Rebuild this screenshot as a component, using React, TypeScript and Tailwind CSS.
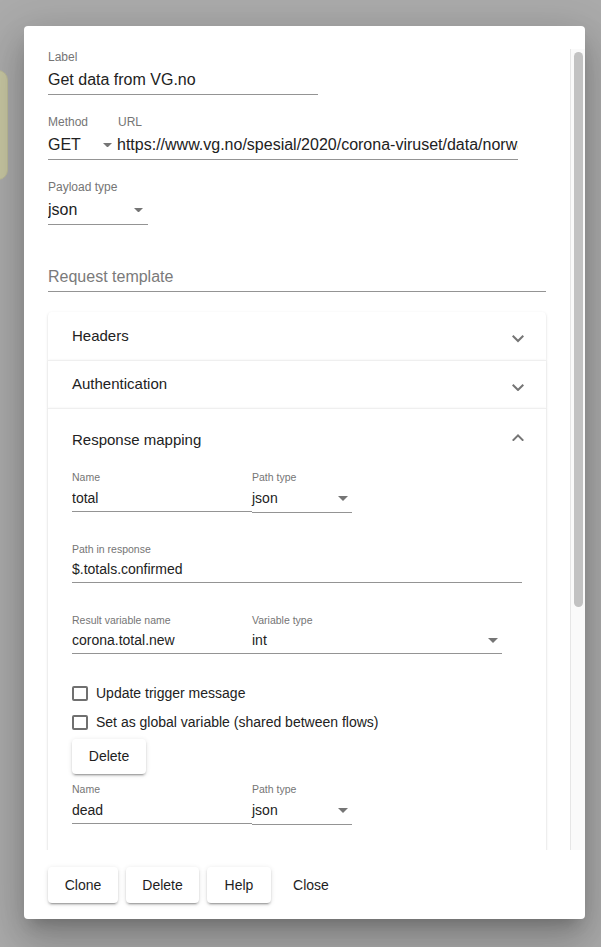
import React from "react";

function Arrow({ big }: { big?: boolean }) {
  return (
    <svg
      viewBox="7 10 10 5"
      className={big ? "w-[9px] h-[4.5px] mr-[5px] shrink-0" : "w-[10px] h-[5px] mr-[4px] shrink-0"}
      fill="#757575"
    >
      <path d="M7 10l5 5 5-5z" />
    </svg>
  );
}

function Chevron({ up }: { up?: boolean }) {
  return up ? (
    <svg viewBox="6 8 12 7.41" className="w-[12px] h-[7.4px] mb-[6px]" fill="#757575">
      <path d="M12 8l-6 6 1.41 1.41L12 10.83l4.59 4.58L18 14z" />
    </svg>
  ) : (
    <svg viewBox="6 8.59 12 7.41" className="w-[12px] h-[7.4px] mt-[6px]" fill="#757575">
      <path d="M16.59 8.59L12 13.17 7.41 8.59 6 10l6 6 6-6z" />
    </svg>
  );
}

function TopLabel({ children }: { children: React.ReactNode }) {
  return <div className="text-[12px] leading-[14px] text-[#757575] whitespace-nowrap">{children}</div>;
}

function TopInput({ children, select }: { children: React.ReactNode; select?: boolean }) {
  return (
    <div className="h-[31px] pt-[2px] border-b border-[#949494] flex items-center justify-between text-[16px] text-[#222] whitespace-nowrap overflow-hidden">
      <span>{children}</span>
      {select && <Arrow big />}
    </div>
  );
}

function SmallLabel({ children }: { children: React.ReactNode }) {
  return <div className="text-[10.5px] leading-[14px] text-[#757575] whitespace-nowrap">{children}</div>;
}

function SmallInput({ children, select }: { children: React.ReactNode; select?: boolean }) {
  return (
    <div className="h-[27px] border-b border-[#949494] flex items-center justify-between text-[14px] text-[#222] whitespace-nowrap overflow-hidden">
      <span>{children}</span>
      {select && <Arrow />}
    </div>
  );
}

function NameRow({ name, className }: { name: string; className?: string }) {
  return (
    <div className={"flex " + (className ?? "")}>
      <div className="w-[180px]">
        <SmallLabel>Name</SmallLabel>
        <div className="pt-px">
          <SmallInput>{name}</SmallInput>
        </div>
      </div>
      <div className="w-[100px]">
        <SmallLabel>Path type</SmallLabel>
        <div className="h-[29px] pt-px border-b border-[#949494] flex items-center justify-between text-[14px] text-[#222]">
          <span>json</span>
          <Arrow />
        </div>
      </div>
    </div>
  );
}

function Check({ label }: { label: string }) {
  return (
    <div className="h-[29px] flex items-center">
      <div className="w-[15.5px] h-[15.5px] border-2 border-[#707070] rounded-[2px]" />
      <span className="ml-[8.5px] text-[14px] text-[#222]">{label}</span>
    </div>
  );
}

const raised =
  "bg-white rounded-[4px] shadow-[0_3px_1px_-2px_rgba(0,0,0,0.2),0_2px_2px_0_rgba(0,0,0,0.14),0_1px_5px_0_rgba(0,0,0,0.12)] text-[14px] font-medium text-[#1e1e1e] flex items-center justify-center";

const panel =
  "bg-white shadow-[0_1px_1px_-1px_rgba(0,0,0,0.2),0_1px_1px_0_rgba(0,0,0,0.14),0_1px_3px_0_rgba(0,0,0,0.12)]";

export default function App() {
  return (
    <div className="relative w-[601px] h-[947px] overflow-hidden bg-[#ababab] font-['Liberation_Sans',Arial,sans-serif]">
      {/* node on the canvas behind the dialog */}
      <div className="absolute left-[-40px] top-[70px] w-[48px] h-[110px] rounded-[10px] bg-[#c7c6a2] border border-[#bdbc98]" />

      <div className="relative pt-[26px] pl-[24px]">
        <div className="w-[561px] h-[893px] bg-white rounded-[4px] flex flex-col shadow-[0_11px_15px_-7px_rgba(0,0,0,0.2),0_24px_38px_3px_rgba(0,0,0,0.14),0_9px_46px_8px_rgba(0,0,0,0.12)]">
          <div className="h-[23px] shrink-0" />
          <div className="flex h-[801px] shrink-0">
            <div className="w-[546px] overflow-hidden px-6">
              <div className="mt-[1px] w-[270px]">
                <TopLabel>Label</TopLabel>
                <TopInput>Get data from VG.no</TopInput>
              </div>

              <div className="mt-[20px] flex w-[470px]">
                <div className="w-[69px]">
                  <TopLabel>Method</TopLabel>
                  <TopInput select>GET</TopInput>
                </div>
                <div className="flex-1 min-w-0">
                  <div className="pl-[1px]">
                    <TopLabel>URL</TopLabel>
                  </div>
                  <TopInput>https://www.vg.no/spesial/2020/corona-viruset/data/norway/</TopInput>
                </div>
              </div>

              <div className="mt-[20px] w-[100px]">
                <TopLabel>Payload type</TopLabel>
                <TopInput select>json</TopInput>
              </div>

              <div className="mt-[36px] h-[31px] pt-[1px] border-b border-[#949494] flex items-center text-[16px] text-[#7a7a7a]">
                Request template
              </div>

              <div className="mt-[20px]">
                <div className={panel + " rounded-t-[4px] h-[48px] flex items-center justify-between pl-6 pr-[22px]"}>
                  <span className="text-[15px] text-[#222]">Headers</span>
                  <Chevron />
                </div>
                <div className={panel + " border-t border-[#efefef] h-[48px] flex items-center justify-between pl-6 pr-[22px]"}>
                  <span className="text-[15px] text-[#222]">Authentication</span>
                  <Chevron />
                </div>
                <div className={panel + " border-t border-[#efefef] pb-6"}>
                  <div className="h-[61px] pt-[2px] flex items-center justify-between pl-6 pr-[22px]">
                    <span className="text-[15px] text-[#222]">Response mapping</span>
                    <Chevron up />
                  </div>
                  <div className="px-6">
                    <NameRow name="total" />

                    <div className="mt-[29px]">
                      <SmallLabel>Path in response</SmallLabel>
                      <SmallInput>$.totals.confirmed</SmallInput>
                    </div>

                    <div className="mt-[30px] flex w-[430px]">
                      <div className="w-[180px]">
                        <SmallLabel>Result variable name</SmallLabel>
                        <SmallInput>corona.total.new</SmallInput>
                      </div>
                      <div className="flex-1">
                        <SmallLabel>Variable type</SmallLabel>
                        <SmallInput select>int</SmallInput>
                      </div>
                    </div>

                    <div className="mt-[25px]">
                      <Check label="Update trigger message" />
                      <Check label="Set as global variable (shared between flows)" />
                    </div>

                    <button className={raised + " mt-[2px] w-[74px] h-[35px]"}>Delete</button>

                    <NameRow name="dead" className="mt-[8px]" />

                    <div className="mt-[30px]">
                      <SmallLabel>Path in response</SmallLabel>
                      <SmallInput>$.totals.dead</SmallInput>
                    </div>
                  </div>
                </div>
              </div>
            </div>

            <div className="w-[15px] bg-[#fafafa] border-l border-[#e6e6e6] pl-[3px] pt-[3px]">
              <div className="w-[9px] h-[555px] rounded-full bg-[#c2c2c2]" />
            </div>
          </div>

          <div className="h-[69px] shrink-0 flex items-center gap-2 px-6 pt-px">
            <button className={raised + " w-[70px] h-[36px]"}>Clone</button>
            <button className={raised + " w-[73px] h-[36px]"}>Delete</button>
            <button className={raised + " w-[64px] h-[36px]"}>Help</button>
            <button className="w-[64px] h-[36px] text-[14px] font-medium text-[#1e1e1e] flex items-center justify-center">
              Close
            </button>
          </div>
        </div>
      </div>
    </div>
  );
}
